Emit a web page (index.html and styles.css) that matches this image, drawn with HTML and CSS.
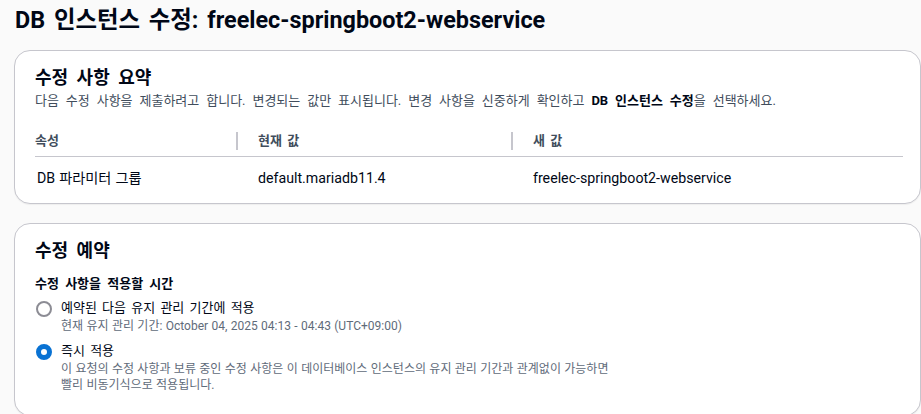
FILE: index.html
```html
<!DOCTYPE html>
<html lang="ko">
<head>
<meta charset="utf-8">
<link rel="stylesheet" href="styles.css">
</head>
<body>
<div class="page">
  <h1 class="title">DB 인스턴스 수정: freelec-springboot2-webservice</h1>

  <section class="card card-summary">
    <h2 class="card-title">수정 사항 요약</h2>
    <p class="card-desc">다음 수정 사항을 제출하려고 합니다. 변경되는 값만 표시됩니다. 변경 사항을 신중하게 확인하고 <b>DB 인스턴스 수정</b>을 선택하세요.</p>
    <div class="table">
      <div class="row head">
        <div class="cell c1">속성</div>
        <div class="cell c2"><span class="sep"></span>현재 값</div>
        <div class="cell c3"><span class="sep"></span>새 값</div>
      </div>
      <div class="row body">
        <div class="cell c1">DB 파라미터 그룹</div>
        <div class="cell c2">default.mariadb11.4</div>
        <div class="cell c3">freelec-springboot2-webservice</div>
      </div>
    </div>
  </section>

  <section class="card card-schedule">
    <h2 class="card-title">수정 예약</h2>
    <div class="field-label">수정 사항을 적용할 시간</div>
    <div class="radio-group">
      <div class="radio-item">
        <span class="radio"></span>
        <div class="radio-text">
          <div class="radio-label">예약된 다음 유지 관리 기간에 적용</div>
          <div class="radio-desc">현재 유지 관리 기간: October 04, 2025 04:13 - 04:43 (UTC+09:00)</div>
        </div>
      </div>
      <div class="radio-item">
        <span class="radio checked"></span>
        <div class="radio-text">
          <div class="radio-label">즉시 적용</div>
          <div class="radio-desc">이 요청의 수정 사항과 보류 중인 수정 사항은 이 데이터베이스 인스턴스의 유지 관리 기간과 관계없이 가능하면<br>빨리 비동기식으로 적용됩니다.</div>
        </div>
      </div>
    </div>
  </section>
</div>
</body>
</html>
```

FILE: styles.css
```css
html, body {
  margin: 0;
  padding: 0;
  background: #fafafa;
  font-family: Roboto, "Noto Sans CJK KR", sans-serif;
  color: #000716;
  overflow: hidden;
}

.page {
  display: flex;
  flex-direction: column;
  padding-left: 14px;
  width: 907px;
  height: 414px;
}

.title {
  margin: 0;
  padding: 6px 0 0 1px;
  font-size: 23.4px;
  line-height: 28px;
  font-weight: 700;
  word-spacing: 3px;
  height: 44px;
  flex: none;
}

.card {
  flex: none;
  background: #fff;
  border: 1px solid #c6c6cd;
  border-radius: 16px;
  padding: 16px 20px 0 20px;
  box-shadow: 0 1px 1px rgba(0, 7, 22, 0.05);
}

.card-summary {
  height: 136px;
}

.card-schedule {
  margin-top: 19px;
  height: 175px;
}

.card-title {
  margin: 0;
  font-size: 18px;
  line-height: 22px;
  font-weight: 700;
  word-spacing: 4px;
}

.card-desc {
  margin: 2px 0 0 0;
  font-size: 13px;
  line-height: 20px;
  color: #414d5c;
  word-spacing: 3.7px;
}

.card-desc b {
  color: #000716;
  font-weight: 700;
}

.table {
  margin-top: 15px;
  width: 868px;
}

.row {
  display: grid;
  grid-template-columns: 201px 275px 1fr;
}

.row.head {
  height: 30px;
  border-bottom: 1px solid #c6c6cd;
  align-items: center;
  font-weight: 700;
  font-size: 13px;
  color: #414d5c;
  word-spacing: 2px;
}

.row.body {
  height: 42px;
  align-items: center;
  font-size: 14.2px;
  color: #000716;
  word-spacing: 0.5px;
}

.cell {
  position: relative;
  padding-left: 22px;
  line-height: 20px;
}

.cell.c1 {
  padding-left: 0;
}

.row.body .cell.c1 {
  padding-left: 2px;
}

.sep {
  position: absolute;
  left: 0;
  top: 1px;
  width: 2px;
  height: 18px;
  background: #c6c6cd;
}

.field-label {
  margin-top: 12px;
  font-size: 13px;
  line-height: 20px;
  font-weight: 700;
  word-spacing: 3px;
}

.radio-group {
  display: flex;
  flex-direction: column;
  gap: 7px;
  margin-top: 4px;
}

.radio-item {
  display: flex;
  gap: 9px;
  align-items: flex-start;
}

.radio {
  flex: none;
  box-sizing: border-box;
  width: 16px;
  height: 16px;
  margin-top: 3px;
  margin-left: 1px;
  border-radius: 50%;
  border: 2px solid #8c8c94;
  background: #fff;
}

.radio.checked {
  border: 5px solid #0972d3;
}

.radio-label {
  font-size: 13px;
  line-height: 20px;
  word-spacing: 2px;
}

.radio-desc {
  font-size: 12px;
  line-height: 16px;
  color: #5f6b7a;
  word-spacing: 0.4px;
}
```
